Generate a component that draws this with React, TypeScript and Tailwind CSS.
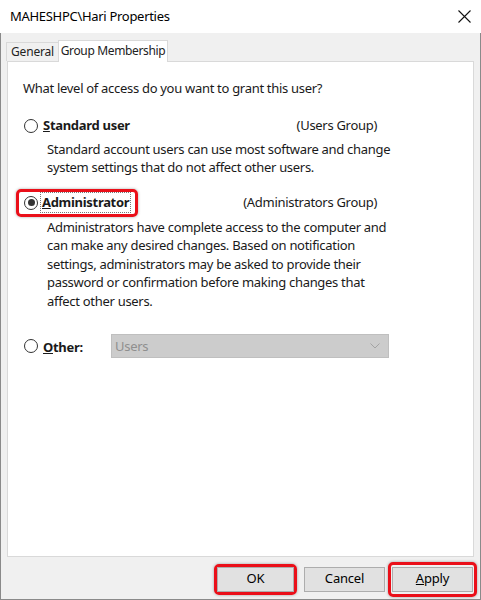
import React from 'react';

function Radio({ checked }: { checked?: boolean }) {
  return (
    <span className="w-[14px] h-[14px] rounded-full border border-[#333] bg-white flex items-center justify-center shrink-0">
      {checked && <span className="w-[7px] h-[7px] rounded-full bg-[#333]" />}
    </span>
  );
}

function Btn({ label, ul, w }: { label: string; ul?: boolean; w: string }) {
  return (
    <button
      className={
        w +
        ' h-[25px] bg-[#e1e1e1] border border-[#adadad] text-[13px] tracking-[-0.2px] text-black flex items-center justify-center'
      }
    >
      {ul ? (
        <span>
          <u>{label[0]}</u>
          {label.slice(1)}
        </span>
      ) : (
        label
      )}
    </button>
  );
}

export default function App() {
  return (
    <div
      className="w-[481px] h-[600px] bg-white flex flex-col text-[#111] overflow-hidden"
      style={{ fontFamily: '"Noto Sans", "Open Sans", sans-serif' }}
    >
      {/* Title bar */}
      <div className="h-[33px] shrink-0 flex items-center justify-between pl-[10px] pr-[12px]">
        <span className="text-[13px] tracking-[-0.3px] text-black">MAHESHPC\Hari Properties</span>
        <svg width="13" height="13" viewBox="0 0 13 13" className="-mr-[2px]">
          <path d="M0.5 0.5 L12.5 12.5 M12.5 0.5 L0.5 12.5" stroke="#111" strokeWidth="1.1" />
        </svg>
      </div>

      {/* Body */}
      <div className="flex-1 flex flex-col bg-[#f0f0f0] border-l border-r border-b border-[#8a8a8a]">
        {/* Tabs */}
        <div className="flex items-end pl-[5px] h-[28px]">
          <div className="h-[19px] w-[53px] border border-b-0 border-[#d9d9d9] bg-[#f0f0f0] text-[12px] tracking-[-0.2px] leading-[18px] text-[#222] flex justify-center whitespace-nowrap">
            General
          </div>
          <div className="h-[22px] w-[110px] -ml-px border border-b-0 border-[#d9d9d9] bg-white text-[12px] tracking-[-0.35px] leading-[20px] text-[#222] -mb-px relative z-10 flex justify-center whitespace-nowrap">
            Group Membership
          </div>
        </div>

        {/* Panel */}
        <div className="mx-[6px] h-[496px] bg-white border border-[#d9d9d9] pl-[15px] text-[13px] tracking-[-0.3px] leading-[18.5px] text-[#1a1a1a]">
          <div className="pt-[17px]">What level of access do you want to grant this user?</div>

          {/* Standard user */}
          <div className="mt-[18px] flex items-center h-[20px] w-[354px]">
            <span className="ml-[1px]">
              <Radio />
            </span>
            <span className="ml-[5px] font-bold">
              <u>S</u>tandard user
            </span>
            <span className="ml-auto">(Users Group)</span>
          </div>
          <div className="pl-[24px] mt-[4px]">
            Standard account users can use most software and change
            <br />
            system settings that do not affect other users.
          </div>

          {/* Administrator */}
          <div className="mt-[12px] flex items-center h-[28px] w-[354px]">
            <div className="h-[28px] -ml-[7px] pl-[7px] pr-[4px] flex items-center rounded-[5px] border-[3px] border-[#ea0f19] shadow-[0_0_3px_rgba(0,0,0,0.35)]">
              <span className="-ml-[2px]">
                <Radio checked />
              </span>
              <span className="ml-[2px] px-[1px] border border-dotted border-[#777] font-bold leading-[19px]">
                <u>A</u>dministrator
              </span>
            </div>
            <span className="ml-auto">(Administrators Group)</span>
          </div>
          <div className="pl-[24px] mt-[1px]">
            Administrators have complete access to the computer and
            <br />
            can make any desired changes. Based on notification
            <br />
            settings, administrators may be asked to provide their
            <br />
            password or confirmation before making changes that
            <br />
            affect other users.
          </div>

          {/* Other */}
          <div className="mt-[24px] flex items-center h-[24px]">
            <span className="ml-[1px]">
              <Radio />
            </span>
            <span className="ml-[5px] mt-[3px] font-bold w-[68px]">
              <u>O</u>ther:
            </span>
            <div className="w-[278px] h-[24px] bg-[#cccccc] border border-[#bfbfbf] flex items-center justify-between pl-[3px] pr-[8px] text-[#8f8f8f]">
              <span>Users</span>
              <svg width="10" height="6" viewBox="0 0 10 6">
                <path d="M0.5 0.5 L5 5 L9.5 0.5" fill="none" stroke="#a3a3a3" strokeWidth="1" />
              </svg>
            </div>
          </div>
        </div>

        {/* Buttons */}
        <div className="flex items-center justify-end pr-[3px] pt-[4px] h-[40px]">
          <div className="rounded-[5px] border-[3px] border-[#ea0f19] shadow-[0_0_3px_rgba(0,0,0,0.35)]">
            <Btn label="OK" w="w-[77px]" />
          </div>
          <div className="ml-[7px]">
            <Btn label="Cancel" w="w-[81px]" />
          </div>
          <div className="ml-[3px] rounded-[5px] border-[3px] border-[#ea0f19] px-[1px] py-[2px] shadow-[0_0_3px_rgba(0,0,0,0.35)]">
            <Btn label="Apply" ul w="w-[81px]" />
          </div>
        </div>
      </div>
    </div>
  );
}
